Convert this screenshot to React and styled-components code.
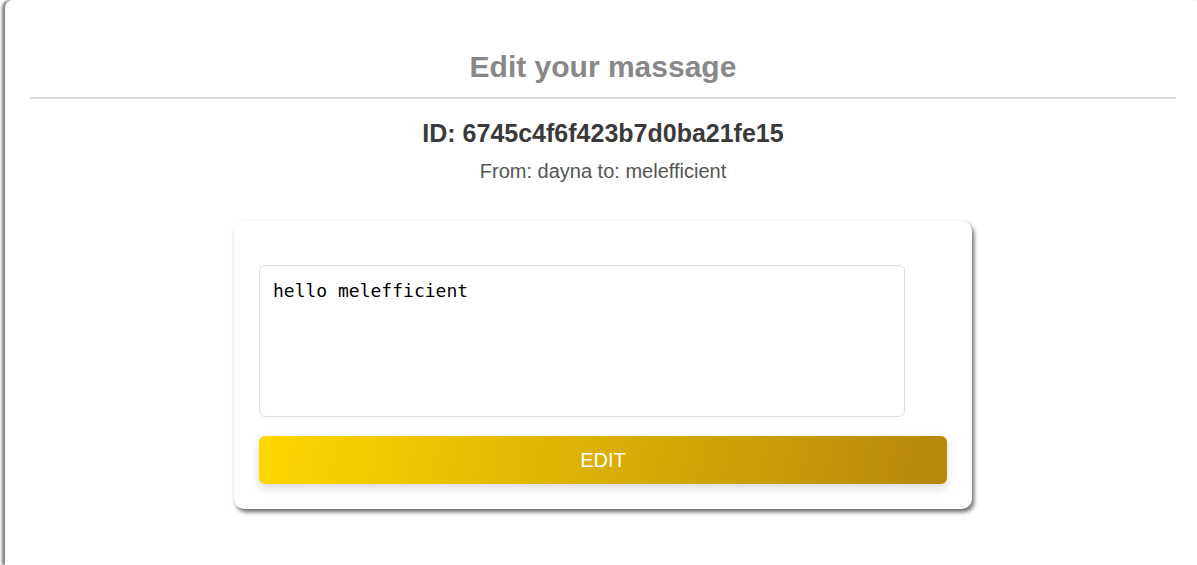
import React, { useState } from 'react'
import styled, { createGlobalStyle } from 'styled-components'

const GlobalStyle = createGlobalStyle`
  html, body {
    margin: 0;
    padding: 0;
    background: #fff;
    overflow: hidden;
    font-family: "Liberation Sans", Arial, sans-serif;
  }
`

const Page = styled.div`
  padding-left: 5px;
  width: 1220px;
`

const Card = styled.div`
  width: 1196px;
  min-height: 100vh;
  box-sizing: border-box;
  padding: 0 25px;
  background: #fff;
  border-radius: 8px 8px 0 0;
  box-shadow: -3px 0 3px rgba(0, 0, 0, 0.5);
  text-align: center;
`

const Title = styled.h2`
  margin: 0;
  padding-top: 50px;
  padding-bottom: 13px;
  font-size: 30px;
  font-weight: bold;
  color: #888;
  border-bottom: 2px solid #dcdcdc;
`

const MessageId = styled.h3`
  margin: 20px 0 0;
  font-size: 25px;
  font-weight: bold;
  color: #3a3a3a;
`

const Route = styled.p`
  margin: 12px 0 0;
  font-size: 20px;
  color: #555;
`

const EditBox = styled.form`
  width: 738px;
  box-sizing: border-box;
  margin: 38px auto 0;
  padding: 44px 25px 25px;
  background: #fff;
  border-radius: 10px;
  box-shadow: 2px 3px 4px rgba(0, 0, 0, 0.6);
  display: flex;
  flex-direction: column;
  align-items: flex-start;
  gap: 19px;
`

const TextArea = styled.textarea`
  width: 646px;
  height: 152px;
  box-sizing: border-box;
  padding: 14px 13px 12px;
  border: 1px solid #ddd;
  border-radius: 6px;
  font-family: "DejaVu Sans Mono", "Liberation Mono", monospace;
  font-size: 18px;
  color: #000;
  resize: none;
  outline: none;
`

const Button = styled.button`
  width: 100%;
  height: 48px;
  border: none;
  border-radius: 6px;
  background: linear-gradient(100deg, #ffd700 0%, #b8860b 100%);
  box-shadow: 0 4px 10px rgba(0, 0, 0, 0.15);
  color: #fff;
  font-family: "Liberation Sans", Arial, sans-serif;
  font-size: 20px;
  cursor: pointer;
`

export default function App () {
  const [value, setValue] = useState('hello melefficient')
  return (
    <Page>
      <GlobalStyle />
      <Card>
        <Title>Edit your massage</Title>
        <MessageId>ID: 6745c4f6f423b7d0ba21fe15</MessageId>
        <Route>From: dayna to: melefficient</Route>
        <EditBox onSubmit={e => e.preventDefault()}>
          <TextArea value={value} onChange={e => setValue(e.target.value)} />
          <Button type='submit'>EDIT</Button>
        </EditBox>
      </Card>
    </Page>
  )
}
